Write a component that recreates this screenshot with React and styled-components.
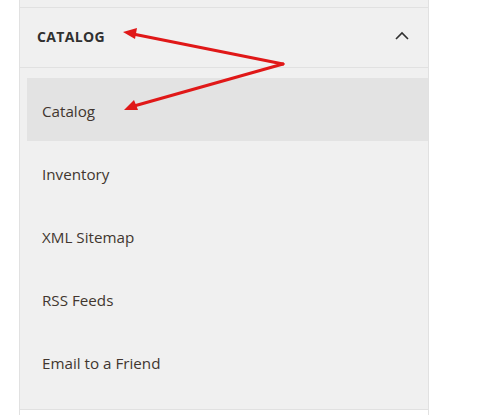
import React from 'react';
import styled, { createGlobalStyle } from 'styled-components';

const GlobalStyle = createGlobalStyle`
  html, body {
    margin: 0;
    padding: 0;
    background: #ffffff;
    font-family: "Open Sans", "Liberation Sans", sans-serif;
  }
`;

const Page = styled.div`
  position: relative;
  width: 495px;
  height: 415px;
  overflow: hidden;
  padding-left: 19px;
  box-sizing: border-box;
`;

const Panel = styled.div`
  width: 410px;
  height: 100%;
  box-sizing: border-box;
  border-left: 1px solid #e1e1e1;
  border-right: 1px solid #e1e1e1;
  display: flex;
  flex-direction: column;
`;

const TopStrip = styled.div`
  height: 7px;
  background: #f0f0f0;
  border-bottom: 1px solid #e1e1e1;
`;

const Header = styled.div`
  height: 59px;
  background: #f0f0f0;
  border-bottom: 1px solid #e1e1e1;
  display: flex;
  align-items: center;
  justify-content: space-between;
  padding: 0 19px 0 17px;
`;

const HeaderTitle = styled.span`
  font-size: 14px;
  font-weight: 700;
  letter-spacing: 0.35px;
  color: #303030;
  margin-top: -2px;
`;

const SubMenu = styled.ul`
  list-style: none;
  margin: 0;
  padding: 10px 0 16px 7px;
  background: #f0f0f0;
  border-bottom: 1px solid #e1e1e1;
`;

const Item = styled.li`
  height: 63px;
  display: flex;
  align-items: center;
  padding-left: 15px;
  padding-top: 2px;
  box-sizing: border-box;
  font-size: 15.2px;
  color: #41362f;
  background: ${p => (p.$active ? '#e3e3e3' : 'transparent')};
`;

const Rest = styled.div`
  flex: 1;
  background: #ffffff;
`;

const Overlay = styled.svg`
  position: absolute;
  left: 0;
  top: 0;
  pointer-events: none;
`;

const items = ['Catalog', 'Inventory', 'XML Sitemap', 'RSS Feeds', 'Email to a Friend'];

const App = () => (
  <>
    <GlobalStyle />
    <Page>
      <Panel>
        <TopStrip />
        <Header>
          <HeaderTitle>CATALOG</HeaderTitle>
          <svg width="14" height="9" viewBox="0 0 14 9" style={{ marginTop: -4 }}>
            <path d="M1 8 L7 2 L13 8" fill="none" stroke="#303030" strokeWidth="1.6" />
          </svg>
        </Header>
        <SubMenu>
          {items.map((label, i) => (
            <Item key={label} $active={i === 0}>{label}</Item>
          ))}
        </SubMenu>
        <Rest />
      </Panel>
      <Overlay width="495" height="415" viewBox="0 0 495 415">
        <g stroke="#e01818" strokeWidth="3" strokeLinecap="round" fill="none">
          <path d="M283 64 L133 34" />
          <path d="M283 64 L134 106" />
        </g>
        <g fill="#e01818">
          <polygon points="123,32 137,28 135,39" />
          <polygon points="124,110 134,100 138,110" />
        </g>
      </Overlay>
    </Page>
  </>
);

export default App;
